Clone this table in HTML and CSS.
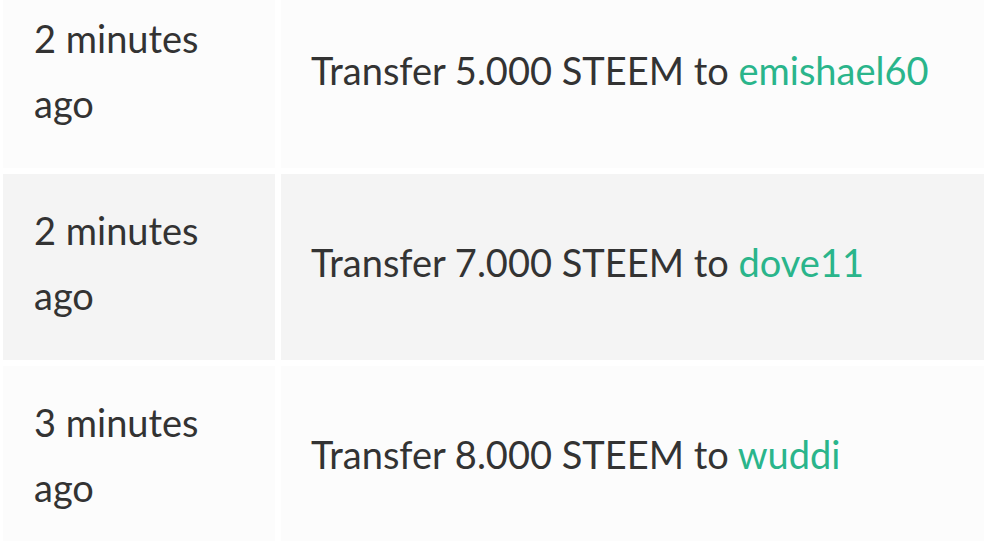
FILE: index.html
```html
<!DOCTYPE html>
<html lang="en">
<head>
<meta charset="utf-8">
<title>Transfers</title>
<link rel="stylesheet" href="styles.css">
</head>
<body>
<table class="history">
  <tbody>
    <tr class="row">
      <td class="when">2 minutes ago</td>
      <td class="what">Transfer 5.000 STEEM to <a class="user" href="#">emishael60</a></td>
    </tr>
    <tr class="row">
      <td class="when">2 minutes ago</td>
      <td class="what">Transfer 7.000 STEEM to <a class="user" href="#">dove11</a></td>
    </tr>
    <tr class="row">
      <td class="when">3 minutes ago</td>
      <td class="what">Transfer 8.000 STEEM to <a class="user" href="#">wuddi</a></td>
    </tr>
  </tbody>
</table>
</body>
</html>
```

FILE: styles.css
```css
html, body {
  margin: 0;
  padding: 0;
  background: #ffffff;
  overflow: hidden;
}

body {
  font-family: "Lato", "Source Sans Pro", sans-serif;
  color: #333333;
}

.history {
  border-collapse: separate;
  border-spacing: 6px;
  margin: -24px 0 0 -3px;
  width: 1010px;
  table-layout: fixed;
}

.row td {
  height: 186px;
  box-sizing: border-box;
  padding: 0 31px 9px 31px;
  vertical-align: middle;
  font-size: 38px;
  line-height: 65px;
  background: #fcfcfc;
}

.row:nth-child(even) td {
  background: #f4f4f4;
}

.when {
  width: 272px;
}

.row td.what {
  padding-left: 30px;
}

.user {
  color: #2ab58b;
  text-decoration: none;
}
```
